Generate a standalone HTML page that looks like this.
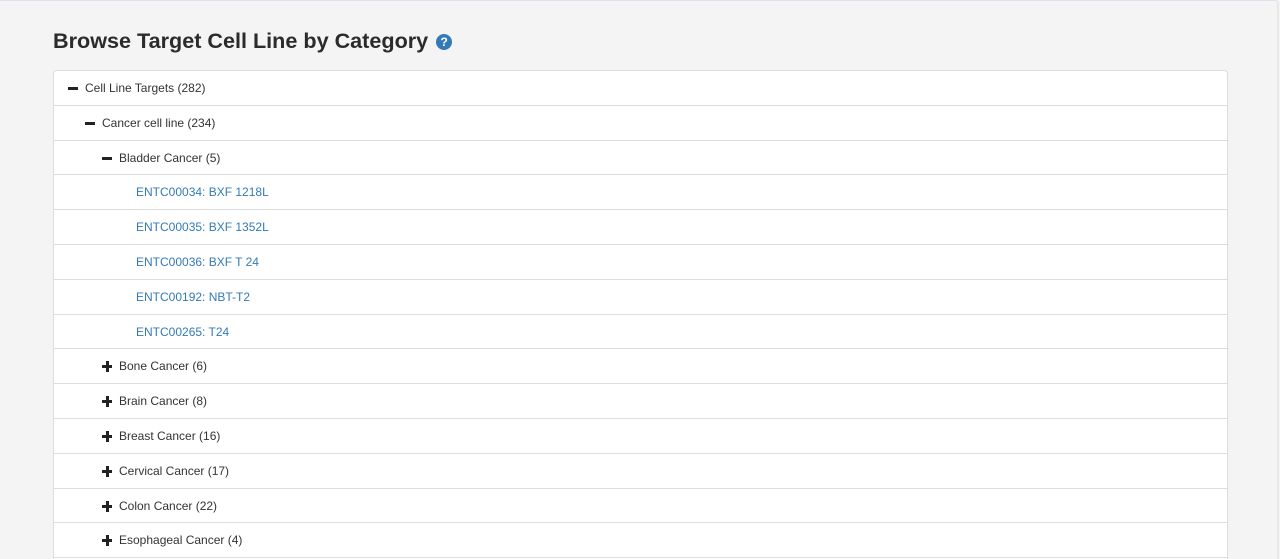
<!DOCTYPE html>
<html><head><style>
html,body{margin:0;padding:0;overflow:hidden}
body{width:1280px;height:559px;overflow:hidden;background:#f4f4f4;font-family:"Liberation Sans",Arial,sans-serif}
.wrap{position:absolute;left:0;top:0;width:1277px;height:558px;background:#f4f4f4;border-top:1px solid #e6dced;border-right:2px solid #e8e8e8;border-radius:0 4px 0 0;overflow:hidden}
h1{position:absolute;left:53px;top:27px;margin:0;font-size:21.6px;font-weight:bold;color:#2b2b2b}
.q{display:inline-block;width:16px;height:16px;border-radius:50%;background:#337ab7;color:#fff;font-size:12px;line-height:16px;text-align:center;vertical-align:2px;margin-left:8px;font-weight:bold}
.list{position:absolute;left:53px;top:69px;width:1173px;height:520px;border:1px solid #ddd;border-radius:4px;background:#fff;overflow:hidden}
.row{height:33.8px;border-bottom:1px solid #ddd;font-size:12px;color:#333;line-height:34px;position:relative}
.row span.t{position:absolute}
.ic{position:absolute;top:11px;width:10px;height:12px}
.m::before{content:"";position:absolute;left:0;top:5px;width:10px;height:3px;background:#222}
.p::before{content:"";position:absolute;left:0;top:5px;width:10px;height:3px;background:#222}
.p::after{content:"";position:absolute;left:3.5px;top:1px;width:3px;height:11px;background:#222}
a{color:#337ab7;text-decoration:none}
</style></head><body><div class="wrap">
<h1>Browse Target Cell Line by Category<span class="q">?</span></h1>
<div class="list">
<div class="row"><i class="ic m" style="left:14px"></i><span class="t" style="left:31px">Cell Line Targets (282)</span></div>
<div class="row"><i class="ic m" style="left:31px"></i><span class="t" style="left:48px">Cancer cell line (234)</span></div>
<div class="row"><i class="ic m" style="left:48px"></i><span class="t" style="left:65px">Bladder Cancer (5)</span></div>
<div class="row"><span class="t" style="left:82px"><a>ENTC00034: BXF 1218L</a></span></div>
<div class="row"><span class="t" style="left:82px"><a>ENTC00035: BXF 1352L</a></span></div>
<div class="row"><span class="t" style="left:82px"><a>ENTC00036: BXF T 24</a></span></div>
<div class="row"><span class="t" style="left:82px"><a>ENTC00192: NBT-T2</a></span></div>
<div class="row"><span class="t" style="left:82px"><a>ENTC00265: T24</a></span></div>
<div class="row"><i class="ic p" style="left:48px"></i><span class="t" style="left:65px">Bone Cancer (6)</span></div>
<div class="row"><i class="ic p" style="left:48px"></i><span class="t" style="left:65px">Brain Cancer (8)</span></div>
<div class="row"><i class="ic p" style="left:48px"></i><span class="t" style="left:65px">Breast Cancer (16)</span></div>
<div class="row"><i class="ic p" style="left:48px"></i><span class="t" style="left:65px">Cervical Cancer (17)</span></div>
<div class="row"><i class="ic p" style="left:48px"></i><span class="t" style="left:65px">Colon Cancer (22)</span></div>
<div class="row"><i class="ic p" style="left:48px"></i><span class="t" style="left:65px">Esophageal Cancer (4)</span></div>
</div>
</div></body></html>
